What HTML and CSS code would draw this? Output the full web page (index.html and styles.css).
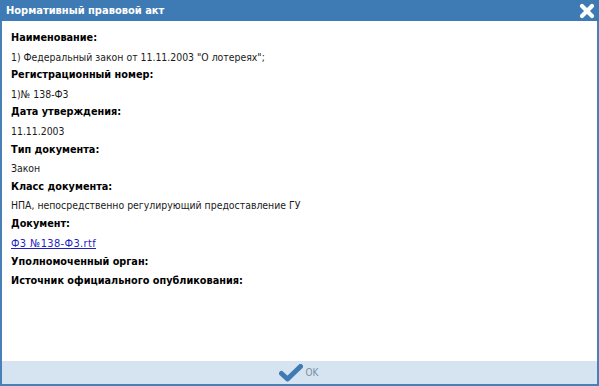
FILE: index.html
```html
<!DOCTYPE html>
<html lang="ru">
<head>
<meta charset="utf-8">
<link rel="stylesheet" href="styles.css">
</head>
<body>
<div class="dialog">
  <div class="titlebar">
    <span class="title">Нормативный правовой акт</span>
    <svg class="close" width="16" height="16" viewBox="0 0 16 16"><path d="M3 3 L13 13 M13 3 L3 13" stroke="#fff" stroke-width="4.2" stroke-linecap="round"/></svg>
  </div>
  <div class="content">
    <div class="label">Наименование:</div>
    <div class="value">1) Федеральный закон от 11.11.2003 "О лотереях";</div>
    <div class="label">Регистрационный номер:</div>
    <div class="value">1)№ 138-Ф3</div>
    <div class="label">Дата утверждения:</div>
    <div class="value">11.11.2003</div>
    <div class="label">Тип документа:</div>
    <div class="value">Закон</div>
    <div class="label">Класс документа:</div>
    <div class="value">НПА, непосредственно регулирующий предоставление ГУ</div>
    <div class="label">Документ:</div>
    <div class="value"><a href="#" class="link">Ф3 №138-Ф3.rtf</a></div>
    <div class="label">Уполномоченный орган:</div>
    <div class="label">Источник официального опубликования:</div>
  </div>
  <div class="footer">
    <div class="ok">
      <svg width="24" height="18" viewBox="0 0 24 18"><path d="M2.5 9.5 L8.5 15 L21.5 2.5" fill="none" stroke="#3f7ab3" stroke-width="5" stroke-linecap="round" stroke-linejoin="round"/></svg>
      <span class="ok-text">OK</span>
    </div>
  </div>
</div>
</body>
</html>
```

FILE: styles.css
```css
html, body {
  margin: 0;
  padding: 0;
  background: #fff;
}
.dialog {
  width: 599px;
  height: 386px;
  box-sizing: border-box;
  display: flex;
  flex-direction: column;
  border-left: 2px solid #4a80b8;
  border-right: 2px solid #4a80b8;
  border-bottom: 2px solid #4a80b8;
  font-family: "DejaVu Sans Condensed", "DejaVu Sans", Verdana, sans-serif;
}
.titlebar {
  height: 21px;
  background: #3e7bb4;
  display: flex;
  align-items: center;
  justify-content: space-between;
  padding: 0 4px 0 4px;
  margin: 0 -2px;
}
.title {
  color: #fff;
  font-weight: bold;
  font-size: 11px;
  padding-left: 2px;
}
.close {
  display: block;
}
.content {
  flex: 1;
  padding: 8px 9px 0;
  line-height: 18.6px;
  color: #000;
}
.label {
  font-weight: bold;
  font-size: 10.8px;
}
.value {
  font-size: 10.4px;
  color: #1a1a1a;
}
.link {
  color: #1f1fc0;
  text-decoration: underline;
  font-size: 11px;
  letter-spacing: 0.35px;
}
.footer {
  height: 23px;
  background: #d6e4f1;
  display: flex;
  align-items: center;
  justify-content: center;
}
.ok {
  display: flex;
  align-items: center;
  gap: 3px;
  margin-left: -2px;
}
.ok svg {
  display: block;
}
.ok-text {
  color: #7a8ea3;
  font-size: 10px;
}
```
